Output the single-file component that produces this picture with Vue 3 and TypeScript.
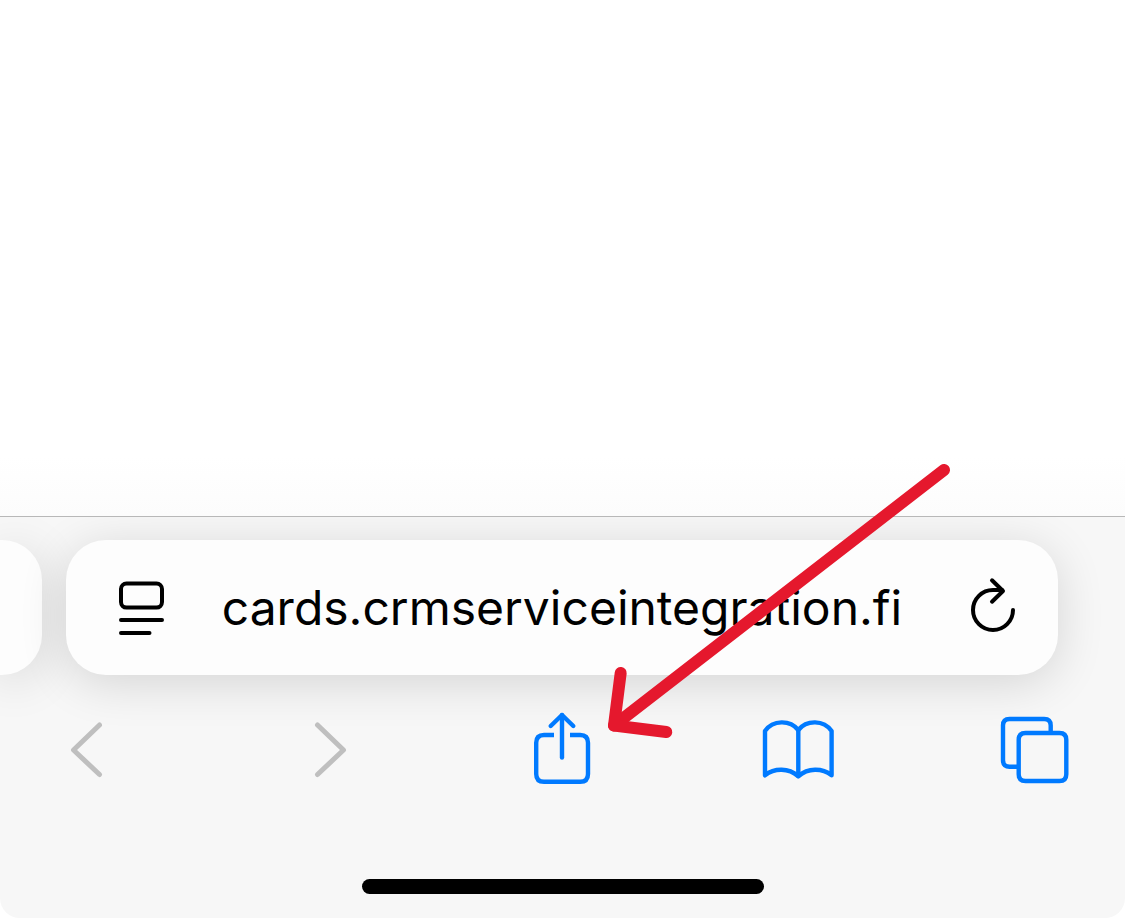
<script setup lang="ts">
import { ref } from 'vue'

interface ToolbarAction {
  id: string
  label: string
  paths: string[]
  disabled?: boolean
}

const address = ref('cards.crmserviceintegration.fi')

const actions: ToolbarAction[] = [
  { id: 'back', label: 'Back', paths: ['M61.5 25 L35.5 50 L61.5 74.5'], disabled: true },
  { id: 'forward', label: 'Forward', paths: ['M42.5 25 L68.5 50 L42.5 74.5'], disabled: true },
  {
    id: 'share',
    label: 'Share',
    paths: [
      'M50 57.5 V15',
      'M38.7 26 L50 15 L61.3 26',
    ],
  },
  {
    id: 'bookmarks',
    label: 'Bookmarks',
    paths: [
      'M16 31 C24 19.7 41 19.7 49.3 30 C57.6 19.7 74.6 19.7 82.6 31 V75.3 C73 67.8 59 67.8 49.3 76.3 C39.6 67.8 25.6 67.8 16 75.3 Z',
      'M49.3 30 V76',
    ],
  },
  {
    id: 'tabs',
    label: 'Tabs',
    paths: [
      'M39.5 33 H73.5 Q80.3 33 80.3 39.8 V74.2 Q80.3 81 73.5 81 H39.5 Q32.7 81 32.7 74.2 V39.8 Q32.7 33 39.5 33 Z',
    ],
  },
]
</script>

<template>
  <div class="page">
    <main class="content"></main>
    <footer class="browser-bar">
      <div class="tab-strip">
        <div class="previous-tab"></div>
        <form class="address-bar" @submit.prevent>
          <button class="field-button" type="button" aria-label="Page menu">
            <svg width="80" height="65" viewBox="0 0 80 65">
              <rect x="30" y="8.6" width="41" height="24" rx="5.5" />
              <path d="M30 45 H71 M30 58 H58.5" />
            </svg>
          </button>
          <input v-model="address" class="address" type="text" aria-label="Address" spellcheck="false" />
          <button class="field-button" type="button" aria-label="Reload">
            <svg width="80" height="65" viewBox="0 0 80 65">
              <path d="M60 35 A20 20 0 1 1 40 15 H49" />
              <path d="M39 5.3 L50 16 L39 26.7" />
            </svg>
          </button>
        </form>
      </div>
      <nav class="toolbar" aria-label="Browser controls">
        <div v-for="action in actions" :key="action.id" class="slot">
          <button class="tool" type="button" :aria-label="action.label" :disabled="action.disabled">
            <svg width="96" height="96" viewBox="0 0 96 96">
              <g v-if="action.id === 'share'" class="butt">
                <path d="M42 35 H32 Q24.2 35 24.2 42.8 V74 Q24.2 81.8 32 81.8 H68.2 Q76 81.8 76 74 V42.8 Q76 35 68.2 35 H58" />
              </g>
              <g v-if="action.id === 'tabs'" class="butt">
                <path d="M64.7 32 V25.5 Q64.7 19 58.2 19 H23.5 Q17 19 17 25.5 V60.2 Q17 66.7 23.5 66.7 H31" />
              </g>
              <path v-for="path in action.paths" :key="path" :d="path" />
            </svg>
          </button>
          <svg v-if="action.id === 'share'" class="pointer" width="350" height="280" viewBox="0 0 350 280" aria-hidden="true">
            <path d="M341 10 L11 265.5" />
            <path d="M17.7 213 L11 265.5 L63.3 272" />
          </svg>
        </div>
      </nav>
      <div class="home-indicator"></div>
    </footer>
  </div>
</template>

<style>
body {
  margin: 0;
  background: #ffffff;
}
</style>

<style scoped>
.page {
  display: flex;
  flex-direction: column;
  min-height: 100vh;
  overflow: hidden;
  font-family: Inter, "Liberation Sans", sans-serif;
}

.content {
  position: relative;
  z-index: 1;
  flex: 1;
  background: linear-gradient(to top, #fcfcfc, #ffffff 60px);
  border-bottom: 1px solid #b8b8b8;
}

.browser-bar {
  padding: 23px 0 24px;
  background: #f7f7f7;
  border-radius: 0 0 20px 20px;
}

.tab-strip {
  display: flex;
  gap: 24px;
  height: 135px;
  padding-right: 67px;
}

.previous-tab,
.address-bar {
  background: #fdfdfd;
  box-shadow: 0 8px 48px rgba(0, 0, 0, 0.14);
}

.previous-tab {
  width: 42px;
  border-radius: 0 40px 40px 0;
}

.address-bar {
  display: flex;
  flex: 1;
  align-items: center;
  min-width: 0;
  padding: 0 25px;
  border-radius: 40px;
}

button {
  display: block;
  padding: 0;
  border: 0;
  background: none;
}

svg {
  display: block;
  fill: none;
  stroke: currentColor;
  stroke-linecap: round;
  stroke-linejoin: round;
}

.field-button {
  flex: none;
  color: #000000;
}

.field-button svg {
  stroke-width: 4;
}

.address {
  flex: 1;
  min-width: 0;
  height: 72px;
  padding: 0;
  border: 0;
  outline: 0;
  background: none;
  color: #000000;
  font-family: inherit;
  font-size: 48px;
  line-height: 72px;
  text-align: center;
}

.toolbar {
  display: flex;
  justify-content: space-between;
  padding: 25px 43px 0 38px;
}

.slot {
  position: relative;
}

.tool {
  color: #007aff;
}

.tool:disabled {
  color: #bfbfbf;
}

.tool svg {
  stroke-width: 4.4;
}

.tool:disabled svg {
  stroke-width: 5;
}

.butt {
  stroke-linecap: butt;
}

.pointer {
  position: absolute;
  z-index: 2;
  bottom: 56px;
  left: 91px;
  color: #e5182d;
  stroke-width: 12;
  pointer-events: none;
}

.home-indicator {
  width: 402px;
  height: 15px;
  margin: 83px auto 0;
  border-radius: 8px;
  background: #000000;
}
</style>
